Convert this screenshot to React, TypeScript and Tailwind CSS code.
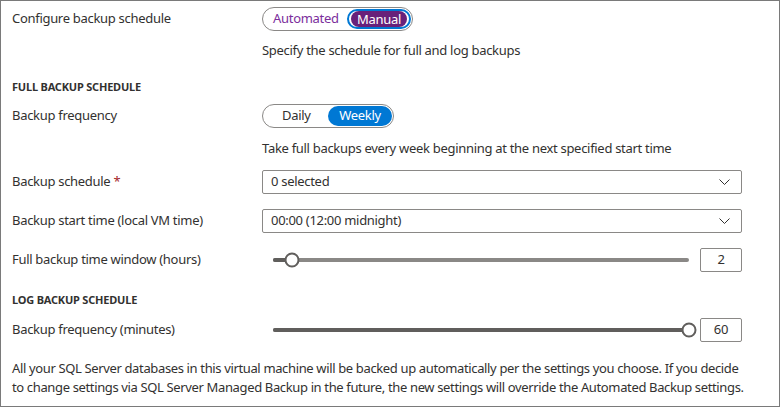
import React from "react";

const font = { fontFamily: '"Noto Sans", "Open Sans", sans-serif' };

function Chevron() {
  return (
    <svg width="11" height="6" viewBox="0 0 11 6" className="block">
      <path d="M0.5 0.5 L5.5 5.5 L10.5 0.5" fill="none" stroke="#323130" strokeWidth="1" />
    </svg>
  );
}

function Dropdown({ value }: { value: string }) {
  return (
    <div className="flex-1 h-[24px] border border-[#8a8886] rounded-[2px] flex items-center justify-between pl-[8px] pr-[11px] text-[13px] text-[#323130]">
      <span>{value}</span>
      <Chevron />
    </div>
  );
}

function Slider({ pct, value, full }: { pct: number; value: string; full?: boolean }) {
  return (
    <div className="flex-1 flex items-center">
      <div className="flex-1 px-[11px]">
        <div className="relative h-[4px] rounded-full bg-[#8a8886]">
          <div className="absolute left-0 top-0 h-[4px] rounded-full bg-[#605e5c]" style={{ width: full ? "100%" : `${pct}%` }} />
          <div
            className="absolute top-1/2 w-[15px] h-[15px] -translate-x-1/2 -translate-y-1/2 rounded-full border-2 border-[#605e5c] bg-white"
            style={{ left: `${pct}%` }}
          />
        </div>
      </div>
      <div className="w-[42px] h-[24px] border border-[#8a8886] rounded-[2px] flex items-center justify-center text-[13px] text-[#323130]">
        {value}
      </div>
    </div>
  );
}

function Row({ label, children, required }: { label: string; children: React.ReactNode; required?: boolean }) {
  return (
    <div className="flex items-center h-[24px]">
      <div className="w-[250px] shrink-0 text-[13px] text-[#323130]">
        {label}
        {required && <span className="text-[#a4262c]"> *</span>}
      </div>
      <div className="flex-1 flex items-center">{children}</div>
    </div>
  );
}

export default function App() {
  return (
    <div style={font} className="w-[780px] h-[407px] border border-[#7a7a7a] bg-white pl-[11px] pr-[37px] pt-[6px] flex flex-col text-[#323130] tracking-[-0.3px]">
      <Row label="Configure backup schedule">
        <div className="h-[24px] w-[151px] border border-[#8a8886] rounded-full flex items-center pl-[10px] pr-[1px]">
          <span className="text-[13px] text-[#7b2e9c]">Automated</span>
          <div className="ml-auto h-[20px] px-[2px] rounded-full border-2 border-[#0078d4] flex items-center">
            <div className="h-[16px] px-[6px] rounded-full bg-[#68217a] text-white text-[13px] leading-[16px] flex items-center">Manual</div>
          </div>
        </div>
      </Row>
      <div className="mt-[10px] ml-[250px] text-[13px] leading-[18px]">Specify the schedule for full and log backups</div>
      <div className="mt-[20px] text-[11px] leading-[16px] font-bold tracking-[-0.2px]">FULL BACKUP SCHEDULE</div>
      <div className="mt-[9px]">
        <Row label="Backup frequency">
          <div className="h-[24px] w-[132px] border border-[#8a8886] rounded-full flex items-center pl-[19px] pr-[1px]">
            <span className="text-[13px]">Daily</span>
            <div className="ml-auto h-[20px] w-[64px] rounded-full bg-[#0078d4] text-white text-[13px] flex items-center justify-center">Weekly</div>
          </div>
        </Row>
      </div>
      <div className="mt-[11px] ml-[250px] text-[13px] leading-[18px]">
        Take full backups every week beginning at the next specified start time
      </div>
      <div className="mt-[13px]">
        <Row label="Backup schedule" required>
          <Dropdown value="0 selected" />
        </Row>
      </div>
      <div className="mt-[15px]">
        <Row label="Backup start time (local VM time)">
          <Dropdown value="00:00 (12:00 midnight)" />
        </Row>
      </div>
      <div className="mt-[15px]">
        <Row label="Full backup time window (hours)">
          <Slider pct={4.6} value="2" />
        </Row>
      </div>
      <div className="mt-[20px] text-[11px] leading-[16px] font-bold tracking-[-0.2px]">LOG BACKUP SCHEDULE</div>
      <div className="mt-[10px]">
        <Row label="Backup frequency (minutes)">
          <Slider pct={100} value="60" full />
        </Row>
      </div>
      <div className="mt-[17px] text-[13px] leading-[19px] whitespace-nowrap tracking-[-0.36px]">
        All your SQL Server databases in this virtual machine will be backed up automatically per the settings you choose. If you decide
        <br />
        to change settings via SQL Server Managed Backup in the future, the new settings will override the Automated Backup settings.
      </div>
    </div>
  );
}
